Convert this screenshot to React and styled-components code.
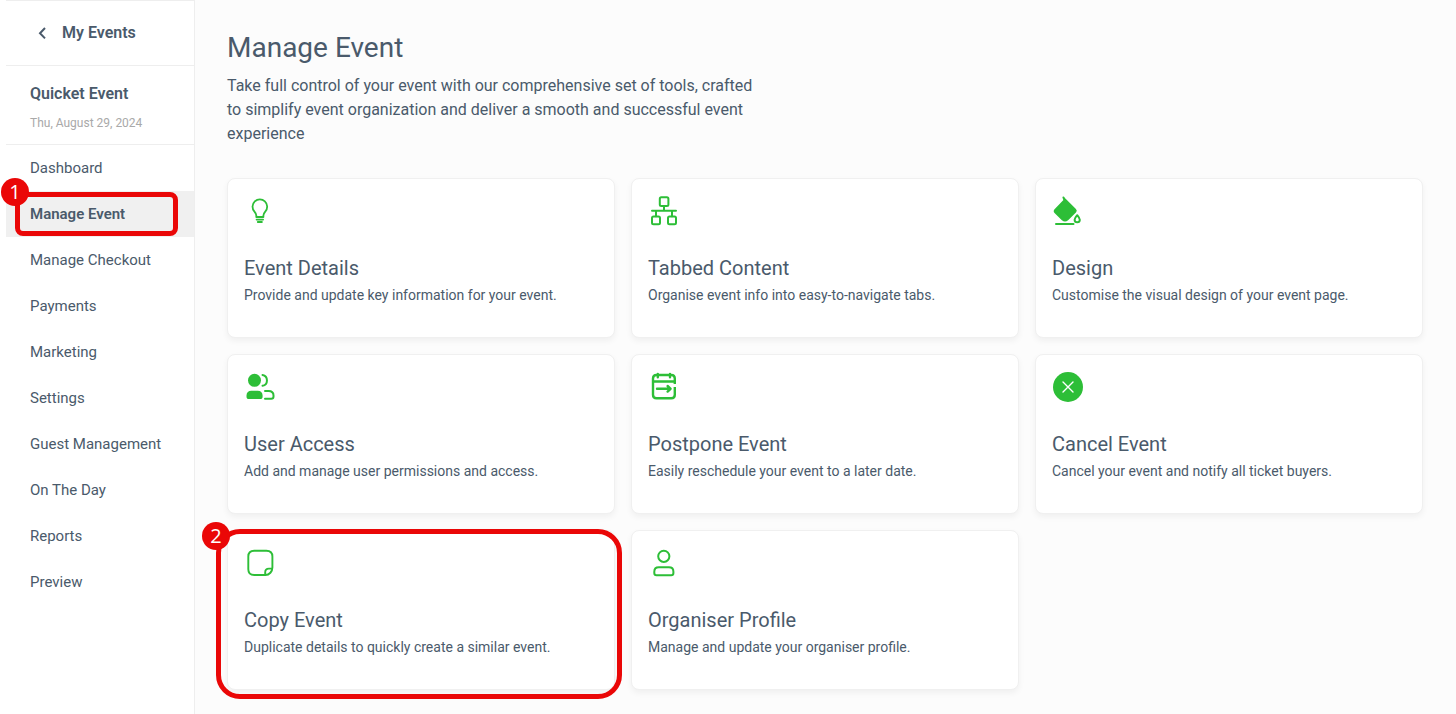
import React from "react";
import styled, { createGlobalStyle } from "styled-components";

const ink = "#4a5a6b";
const green = "#2dbe37";
const red = "#ea0707";

const GlobalStyle = createGlobalStyle`
  *, *::before, *::after { box-sizing: border-box; }
  body {
    margin: 0;
    background: #fcfcfc;
    color: ${ink};
    font-family: Roboto, "Liberation Sans", sans-serif;
  }
`;

const Page = styled.div`
  display: flex;
  min-height: 100vh;
`;

const Sidebar = styled.aside`
  flex: 0 0 195px;
  padding-left: 6px;
  background: #fff;
  border-right: 1px solid #eeeeee;
`;

const BackLink = styled.a`
  display: flex;
  align-items: center;
  gap: 14px;
  height: 66px;
  padding-left: 30px;
  border-top: 1px solid #eeeeee;
  border-bottom: 1px solid #eeeeee;
  color: ${ink};
  font-size: 16px;
  font-weight: 600;
  line-height: 24px;
  text-decoration: none;
`;

const EventSummary = styled.section`
  height: 79px;
  padding: 16px 0 0 24px;
  border-bottom: 1px solid #eeeeee;
`;

const EventName = styled.h2`
  margin: 0;
  font-size: 16px;
  font-weight: 600;
  line-height: 24px;
`;

const EventDate = styled.p`
  margin: 7px 0 0;
  color: #a9a9a9;
  font-size: 12px;
  font-weight: 400;
  line-height: 20px;
`;

const NavList = styled.ul`
  margin: 0;
  padding: 0;
  list-style: none;
`;

const NavItem = styled.li`
  position: relative;
`;

const NavLink = styled.a`
  display: block;
  padding-left: 24px;
  background: ${({ $active }) => ($active ? "#f0f0f0" : "transparent")};
  color: ${ink};
  font-size: 15px;
  font-weight: ${({ $active }) => ($active ? 600 : 400)};
  line-height: 46px;
  text-decoration: none;
`;

const Main = styled.main`
  flex: 1;
  min-width: 0;
  padding: 28px 33px 24px 32px;
`;

const Title = styled.h1`
  margin: 0;
  font-size: 28px;
  font-weight: 400;
  line-height: 40px;
`;

const Intro = styled.p`
  max-width: 540px;
  margin: 6px 0 32px;
  font-size: 16px;
  line-height: 24px;
`;

const CardGrid = styled.div`
  display: grid;
  grid-template-columns: repeat(3, minmax(0, 1fr));
  gap: 16px;
`;

const CardSlot = styled.div`
  position: relative;
`;

const Card = styled.a`
  display: block;
  min-height: 160px;
  padding: 15px 16px;
  border: 1px solid #f0f0f0;
  border-radius: 8px;
  background: #fff;
  box-shadow: 0 3px 6px rgba(0, 0, 0, 0.05);
  color: ${ink};
  text-decoration: none;
`;

const CardIcon = styled.svg`
  display: block;
  width: 32px;
  height: 32px;
  fill: none;
  stroke: ${green};
  stroke-width: 2;
  stroke-linecap: round;
  stroke-linejoin: round;
`;

const CardTitle = styled.h3`
  margin: 28px 0 3px;
  font-size: 20px;
  font-weight: 400;
  line-height: 28px;
`;

const CardText = styled.p`
  margin: 0;
  font-size: 14px;
  line-height: 20px;
`;

const Highlight = styled.div`
  position: absolute;
  inset: ${({ $large }) => ($large ? "-1px -7px -9px -11px" : "1px 16px 1px 9px")};
  border: 5px solid ${red};
  border-radius: ${({ $large }) => ($large ? "24px" : "8px")};
  pointer-events: none;
`;

const Step = styled.span`
  position: absolute;
  top: ${({ $large }) => ($large ? "-12px" : "-19px")};
  left: -19px;
  width: 28px;
  height: 28px;
  border-radius: 50%;
  background: ${red};
  color: #fff;
  font-family: "Open Sans", sans-serif;
  font-size: 20px;
  font-weight: 500;
  line-height: 28px;
  text-align: center;
`;

function Marker({ number, large }) {
  return (
    <Highlight $large={large}>
      <Step $large={large}>{number}</Step>
    </Highlight>
  );
}

const icons = {
  bulb: (
    <g strokeWidth="1.8">
      <path d="M12.300 23v-1.400c0-1.800-.8-2.800-2-4.200A7.300 7.300 0 1 1 21.400 17.400c-1.200 1.400-2 2.400-2 4.200V23z" />
      <path d="M12.600 25.600h6.500M13.800 28h4.100" />
    </g>
  ),
  sitemap: (
    <>
      <rect x="11.800" y="3.300" width="8.600" height="8.600" rx="1.500" />
      <rect x="4" y="22.500" width="8" height="7.700" rx="1.500" />
      <rect x="20" y="22.500" width="8" height="7.700" rx="1.500" />
      <path d="M16 12v4.700M4 16.700h24M8 16.700v5.500M24 16.700v5.500" />
    </>
  ),
  paint: (
    <>
      <path d="M11.300 3.300l1.200 1.600 10.800 10.800c.7.700.7 1.500 0 2.200l-7.800 7.700c-1.500 1.300-3.500 1.300-5 0l-7.100-7c-1-1-1-2 0-3l8.900-9.300z" fill={green} stroke={green} strokeWidth="1.800" />
      <path d="M4 30h17.500" />
      <path d="M25.200 21.200c-1.500 1.800-2.600 3.200-2.600 4.500a2.600 2.600 0 0 0 5.200 0c0-1.300-1.100-2.700-2.600-4.500z" />
    </>
  ),
  users: (
    <>
      <circle cx="10.500" cy="10.300" r="6.500" fill={green} stroke="none" />
      <path d="M2.500 25.500c0-2.800 2-4.800 4.800-4.800h6.500c2.800 0 4.800 2 4.800 4.800v1.200c0 1.500-.9 2.300-2.300 2.300H4.800c-1.400 0-2.300-.8-2.300-2.300z" fill={green} stroke="none" />
      <path d="M18.500 5a5.500 5.500 0 0 1 0 10.800" />
      <path d="M21 21h3.500c3 0 5 1.700 5 4.500v1c0 1.500-.8 2.300-2.300 2.300H21" />
    </>
  ),
  calendar: (
    <g strokeWidth="2.400">
      <path d="M26.800 14V8.500c0-2.300-1.200-3.500-3.500-3.500H8.500C6.200 5 5 6.200 5 8.500v16.200c0 2.300 1.200 3.500 3.500 3.500h14.800c2.300 0 3.500-1.200 3.500-3.500V17" strokeLinecap="butt" />
      <path d="M5.500 11.500h20.800M9.800 4v3.300M22 4v3.300M9 18.800h13.500M19.600 16l3 2.800-3 2.800" />
    </g>
  ),
  cancel: (
    <>
      <circle cx="16" cy="17" r="15" fill={green} stroke="none" />
      <path d="M11 12l10 10M21 12L11 22" stroke="#fff" strokeWidth="1.400" />
    </>
  ),
  note: (
    <g strokeWidth="1.900">
      <path d="M28.400 21.500V10.500c0-3.800-2.200-5.800-6-5.800H10.200c-3.800 0-5.900 2-5.900 5.800v12.700c0 3.800 2.100 5.800 5.900 5.800h11.200c4 0 7-3.500 7-7.500z" />
      <path d="M21.200 28.700v-2.400c0-2.500 1.300-3.700 3.700-3.700h3" />
    </g>
  ),
  person: (
    <>
      <circle cx="15.800" cy="10.300" r="5.600" />
      <path d="M6.300 25.700c0-2.700 1.700-4.400 4.500-4.400h10.100c2.800 0 4.500 1.700 4.500 4.400v1.300c0 1.400-.8 2.200-2.200 2.200H8.500c-1.400 0-2.200-.8-2.200-2.200z" />
    </>
  ),
};

const navItems = [
  { label: "Dashboard" },
  { label: "Manage Event", active: true, step: 1 },
  { label: "Manage Checkout" },
  { label: "Payments" },
  { label: "Marketing" },
  { label: "Settings" },
  { label: "Guest Management" },
  { label: "On The Day" },
  { label: "Reports" },
  { label: "Preview" },
];

const cards = [
  { icon: "bulb", title: "Event Details", text: "Provide and update key information for your event." },
  { icon: "sitemap", title: "Tabbed Content", text: "Organise event info into easy-to-navigate tabs." },
  { icon: "paint", title: "Design", text: "Customise the visual design of your event page." },
  { icon: "users", title: "User Access", text: "Add and manage user permissions and access." },
  { icon: "calendar", title: "Postpone Event", text: "Easily reschedule your event to a later date." },
  { icon: "cancel", title: "Cancel Event", text: "Cancel your event and notify all ticket buyers." },
  { icon: "note", title: "Copy Event", text: "Duplicate details to quickly create a similar event.", step: 2 },
  { icon: "person", title: "Organiser Profile", text: "Manage and update your organiser profile." },
];

export default function App() {
  return (
    <>
      <GlobalStyle />
      <Page>
        <Sidebar>
          <BackLink href="#events">
            <svg width="12" height="14" viewBox="0 0 12 14" fill="none" stroke={ink} strokeWidth="2" aria-hidden="true">
              <path d="M9 2L4 7.200l5 5.200" />
            </svg>
            My Events
          </BackLink>
          <EventSummary>
            <EventName>Quicket Event</EventName>
            <EventDate>Thu, August 29, 2024</EventDate>
          </EventSummary>
          <nav aria-label="Event">
            <NavList>
              {navItems.map(({ label, active, step }) => (
                <NavItem key={label}>
                  <NavLink href="#" $active={active} aria-current={active ? "page" : undefined}>
                    {label}
                  </NavLink>
                  {step && <Marker number={step} />}
                </NavItem>
              ))}
            </NavList>
          </nav>
        </Sidebar>
        <Main>
          <Title>Manage Event</Title>
          <Intro>
            Take full control of your event with our comprehensive set of tools, crafted to simplify event
            organization and deliver a smooth and successful event experience
          </Intro>
          <CardGrid>
            {cards.map(({ icon, title, text, step }) => (
              <CardSlot key={title}>
                <Card href="#">
                  <CardIcon viewBox="0 0 32 32" aria-hidden="true">
                    {icons[icon]}
                  </CardIcon>
                  <CardTitle>{title}</CardTitle>
                  <CardText>{text}</CardText>
                </Card>
                {step && <Marker number={step} large />}
              </CardSlot>
            ))}
          </CardGrid>
        </Main>
      </Page>
    </>
  );
}
